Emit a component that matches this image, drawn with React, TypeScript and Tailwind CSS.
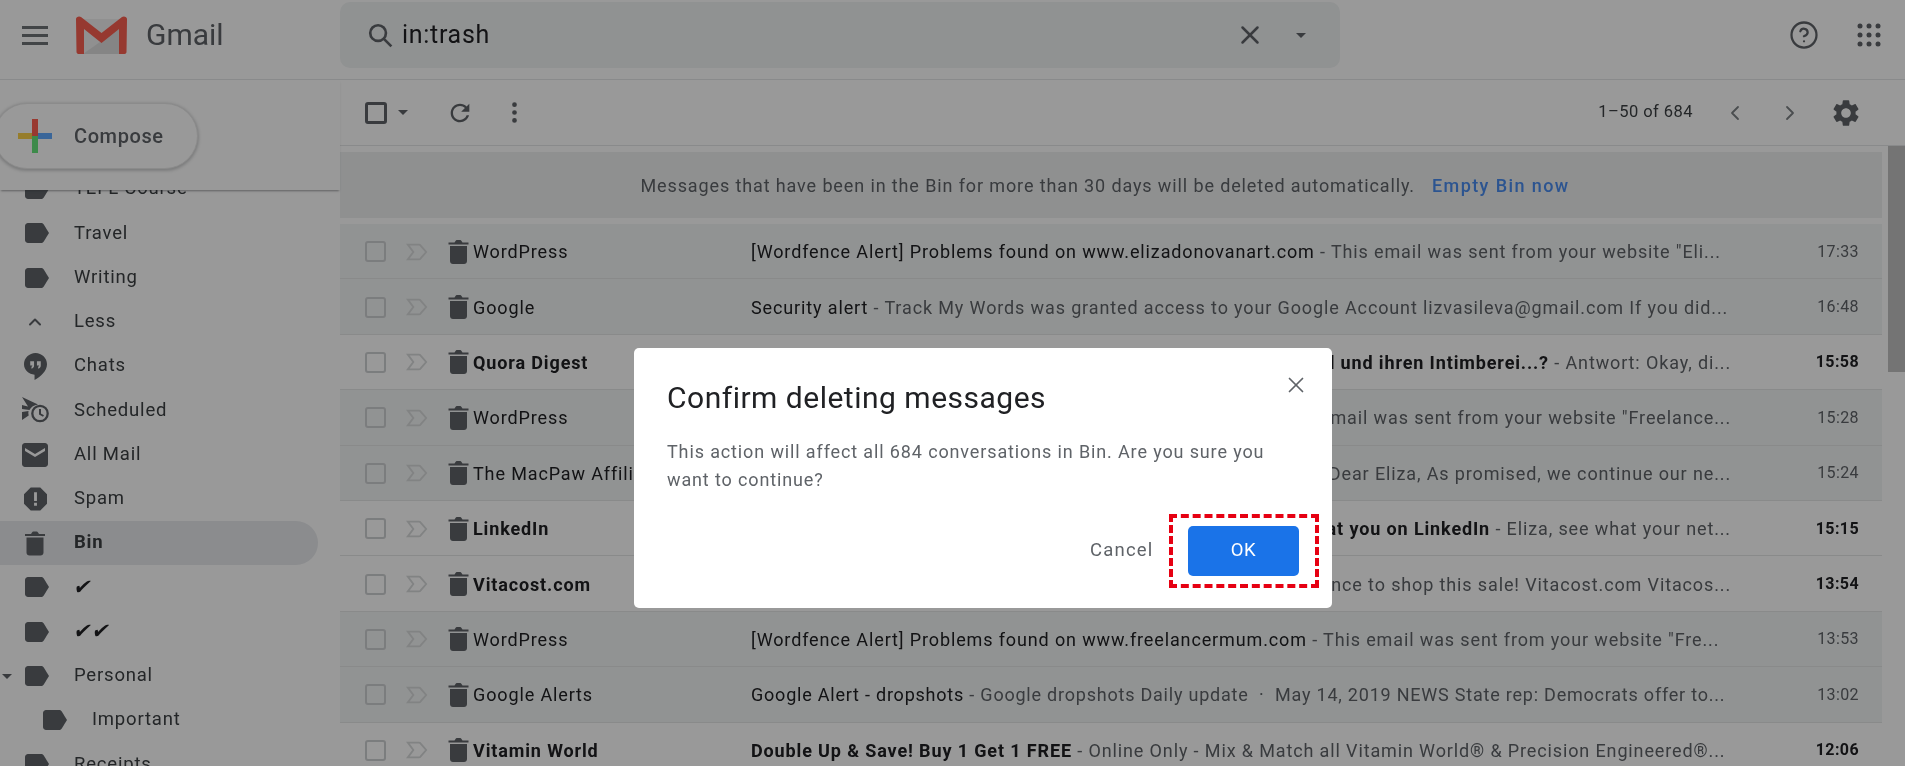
import React from "react";
import { X, ChevronLeft, ChevronRight, ChevronUp, MoreVertical, CircleHelp } from "lucide-react";

const Label = ({ className = "" }: { className?: string }) => (
  <svg viewBox="0 0 24 20" className={"ml-[3px] w-[24px] h-[20px] " + className}><path fill="#5f6368" d="M3 0h13c1 0 2 .5 2.600 1.300L24 10l-5.400 8.700C18 19.500 17 20 16 20H3c-1.600 0-3-1.400-3-3V3c0-1.600 1.400-3 3-3z" /></svg>
);
const Trash = ({ className = "" }: { className?: string }) => (
  <svg viewBox="0 0 20 24" className={className}><path fill="#5f6368" d="M1.500 6h17v15c0 1.700-1.300 3-3 3h-11c-1.700 0-3-1.300-3-3zM0 2.500h6L7 1c.3-.6.8-1 1.400-1h3.200c.6 0 1.100.4 1.400 1l1 1.500h6V4.500H0z" /></svg>
);
const Caret = ({ className = "" }: { className?: string }) => (
  <span className={"w-0 h-0 border-x-[5px] border-x-transparent border-t-[5px] border-t-[#5f6368] " + className} />
);
const Checkbox = ({ strong = false }: { strong?: boolean }) => (
  <span className={strong ? "w-[22px] h-[22px] rounded-[3px] border-[3px] border-[#5f6368]" : "w-[21px] h-[21px] rounded-[3px] border-[2px] border-[#ced0d2]"} />
);

type NavItem = { label: string; icon: React.ReactNode; bold?: boolean; indent?: boolean; caret?: boolean };
const nav: NavItem[] = [
  { label: "TEFL Course", icon: <Label /> },
  { label: "Travel", icon: <Label /> },
  { label: "Writing", icon: <Label /> },
  { label: "Less", icon: <ChevronUp size={20} strokeWidth={2.4} color="#5f6368" /> },
  { label: "Chats", icon: <svg viewBox="0 0 24 28" className="w-[23px] h-[29px]"><path fill="#5f6368" d="M12 0C5.400 0 0 5.200 0 11.700 0 18 5.200 22 11 22.500V28c6-3 13-9 13-16.300C24 5.200 18.600 0 12 0zM10.500 13c0 1.700-1 3-2.700 3.300v-2c.6-.2.900-.6 1-1.300H6.500V8.500h4zm7 0c0 1.700-1 3-2.700 3.300v-2c.6-.2.900-.6 1-1.300h-2.300V8.500h4z" /></svg> },
  { label: "Scheduled", icon: <svg viewBox="0 0 28 26" className="w-[28px] h-[26px]"><path fill="#5f6368" d="M1 0l16 7.500c-4 .5-7 2.500-8.500 5.500L1 12V8l6 1.500zM1 15l6.500-1c-.3 1.500-.2 3 .2 4.500L1 23z" /><circle cx="19" cy="16.500" r="7.700" fill="none" stroke="#5f6368" strokeWidth="2.300" /><path d="M19 12v5l3.500 2" fill="none" stroke="#5f6368" strokeWidth="2" /></svg> },
  { label: "All Mail", icon: <svg viewBox="0 0 26 24" className="w-[26px] h-[24px]"><path fill="#5f6368" d="M3 0h20c1.600 0 3 1.400 3 3v18c0 1.600-1.400 3-3 3H3c-1.600 0-3-1.400-3-3V3c0-1.600 1.400-3 3-3zm0 5v3l10 6 10-6V5L13 11z" fillRule="evenodd" /></svg> },
  { label: "Spam", icon: <svg viewBox="0 0 24 24" className="w-[23px] h-[24px]"><path fill="#5f6368" fillRule="evenodd" d="M7 0h10l7 7v10l-7 7H7l-7-7V7zm3.500 5v9h3V5zm0 11v3h3v-3z" /></svg> },
  { label: "Bin", bold: true, icon: <Trash className="w-[20px] h-[27px]" /> },
  { label: "✔", icon: <Label /> },
  { label: "✔✔", icon: <Label /> },
  { label: "Personal", icon: <Label />, caret: true },
  { label: "Important", icon: <Label />, indent: true },
  { label: "Receipts", icon: <Label /> },
];

type Row = { sender: string; subject: string; snippet: string; time: string; unread?: boolean; covered?: boolean; tight?: boolean };
const rows: Row[] = [
  { sender: "WordPress", subject: "[Wordfence Alert] Problems found on www.elizadonovanart.com", snippet: ' - This email was sent from your website "Eli...', time: "17:33" },
  { sender: "Google", subject: "Security alert", snippet: " - Track My Words was granted access to your Google Account lizvasileva@gmail.com If you did...", time: "16:48" },
  { sender: "Quora Digest", subject: "Was sagt dein Freund und ihren Intimberei...?", snippet: " - Antwort: Okay, di...", time: "15:58", unread: true, covered: true },
  { sender: "WordPress", subject: "[Wordfence Alert] Problems", snippet: ' - This email was sent from your website "Freelance...', time: "15:28", covered: true },
  { sender: "The MacPaw Affiliate", subject: "Affiliate update", snippet: " - Dear Eliza, As promised, we continue our ne...", time: "15:24", covered: true },
  { sender: "LinkedIn", subject: "Eliza, people are looking at you on LinkedIn", snippet: " - Eliza, see what your net...", time: "15:15", unread: true, covered: true },
  { sender: "Vitacost.com", subject: "Last chance", snippet: " - Your last chance to shop this sale! Vitacost.com Vitacos...", time: "13:54", unread: true, covered: true },
  { sender: "WordPress", subject: "[Wordfence Alert] Problems found on www.freelancermum.com", snippet: ' - This email was sent from your website "Fre...', time: "13:53" },
  { sender: "Google Alerts", subject: "Google Alert - dropshots", snippet: " - Google dropshots Daily update \u00a0·\u00a0 May 14, 2019 NEWS State rep: Democrats offer to...", time: "13:02", tight: true },
  { sender: "Vitamin World", subject: "Double Up & Save! Buy 1 Get 1 FREE", snippet: " - Online Only - Mix & Match all Vitamin World® & Precision Engineered®...", time: "12:06", unread: true },
];

export default function App() {
  return (
    <div className="relative w-[1905px] h-[766px] overflow-hidden bg-white flex flex-col font-['Roboto',sans-serif] text-[#202124] blur-[0.4px]">
      <header className="h-[80px] shrink-0 flex items-center border-b border-[#e5e7e8] pb-[9px]">
        <div className="w-[340px] flex items-center">
          <div className="ml-[22px] w-[26px] flex flex-col gap-[5px]">
            <span className="h-[3px] bg-[#6f7377]" />
            <span className="h-[3px] bg-[#6f7377]" />
            <span className="h-[3px] bg-[#6f7377]" />
          </div>
          <svg viewBox="0 0 51 38" className="ml-[28px] w-[51px] h-[38px]">
            <path fill="#f0f0f0" d="M7 3h37v35H7z" />
            <path fill="#dedede" d="M7 38L44 12v26z" />
            <path fill="#fb5f50" d="M0 3C0 1 3-.5 5 1l20.500 16L46 1c2-1.500 5 0 5 2l-.5 33c0 1-1 2-2 2H43V13L25.500 27 8 13v25H2.500c-1 0-2-1-2-2z" />
          </svg>
          <span className="ml-[19px] text-[30px] leading-none text-[#5f6368]">Gmail</span>
        </div>
        <div className="w-[1000px] h-[66px] bg-[#f1f3f4] rounded-[10px] flex items-center text-[#202124]">
          <svg viewBox="0 0 24 24" className="ml-[26px] w-[29px] h-[29px]" fill="none" stroke="#5f6368" strokeWidth="2.200"><circle cx="10" cy="10" r="6.500" /><path d="M15 15l6 6" /></svg>
          <span className="ml-[7px] text-[25px] tracking-[0.7px]">in:trash</span>
          <X size={30} strokeWidth={2} color="#5f6368" className="ml-auto mr-[31px]" />
          <Caret className="mr-[34px]" />
        </div>
        <CircleHelp size={30} strokeWidth={1.8} color="#5f6368" className="ml-[449px]" />
        <svg viewBox="0 0 24 24" className="ml-[38px] w-[24px] h-[24px]">
          {[3, 12, 21].flatMap((y) => [3, 12, 21].map((x) => <circle key={x + "-" + y} cx={x} cy={y} r="2.500" fill="#5f6368" />))}
        </svg>
      </header>

      <div className="flex-1 flex min-h-0">
        <aside className="w-[340px] shrink-0 flex flex-col">
          <div className="h-[110px] shrink-0 relative z-10 bg-white shadow-[0_2px_2px_-1px_rgba(60,64,67,0.5)] pt-[23px]">
            <div className="-ml-[6px] w-[204px] h-[66px] rounded-full bg-white border border-[#e8e8e8] shadow-[0_1px_3px_1px_rgba(60,64,67,0.25)] flex items-center">
              <svg viewBox="0 0 34 34" className="ml-[23px] w-[34px] h-[34px]">
                <rect x="0" y="14" width="17" height="6" fill="#fbd04a" />
                <rect x="17" y="14" width="17" height="6" fill="#62aaff" />
                <rect x="14" y="0" width="6" height="17" fill="#ff6050" />
                <rect x="14" y="17" width="6" height="17" fill="#66e67c" />
              </svg>
              <span className="ml-[22px] text-[20px] font-medium text-[#5f6368] tracking-[0.6px]">Compose</span>
            </div>
          </div>
          <div className="flex-1 overflow-hidden">
            <div className="-mt-[23px] pr-[22px]">
              {nav.map((n) => (
                <div key={n.label} className={"relative h-[44.25px] flex items-center rounded-r-full " + (n.bold ? "bg-[#e8eaed]" : "")}>
                  {n.caret && <Caret className="absolute left-[2px] top-[20px]" />}
                  <span className={"w-[30px] flex justify-center " + (n.indent ? "ml-[38px]" : "ml-[20px]")}>{n.icon}</span>
                  <span className={"ml-[24px] tracking-[0.8px] " + (n.bold ? "font-bold " : "") + (n.label.startsWith("✔") ? "inline-block -skew-x-12 text-[21px] font-['DejaVu_Sans',sans-serif] text-[#202124]" : "text-[18.500px] text-[#3c4043]")}>{n.label}</span>
                </div>
              ))}
            </div>
          </div>
        </aside>

        <main className="flex-1 min-w-0 flex">
          <div className="flex-1 min-w-0 flex flex-col">
            <div className="h-[66px] shrink-0 flex items-center border-b border-[#e5e7e8] pl-[25px] mr-[-17px]">
              <Checkbox strong />
              <Caret className="ml-[11px]" />
              <svg viewBox="0 0 24 24" className="ml-[38px] w-[28px] h-[28px]"><path fill="#5f6368" d="M17.650 6.350C16.200 4.900 14.210 4 12 4c-4.420 0-7.990 3.580-7.990 8s3.570 8 7.990 8c3.730 0 6.840-2.550 7.730-6h-2.080c-.82 2.330-3.040 4-5.650 4-3.310 0-6-2.690-6-6s2.690-6 6-6c1.660 0 3.140.69 4.220 1.780L13 11h7V4l-2.350 2.350z" /></svg>
              <MoreVertical size={27} strokeWidth={2.2} color="#5f6368" className="ml-[27px]" />
              <span className="ml-auto text-[16.500px] tracking-[0.45px] text-[#3c4043]">1–50 of 684</span>
              <ChevronLeft size={24} strokeWidth={1.800} color="#7c8084" className="ml-[30px]" />
              <ChevronRight size={24} strokeWidth={1.800} color="#7c8084" className="ml-[31px]" />
              <svg viewBox="0 0 24 24" className="ml-[28px] mr-[43px] w-[32px] h-[32px]"><path fill="#5f6368" d="M19.140 12.940c.04-.3.06-.61.06-.94 0-.32-.02-.64-.07-.94l2.030-1.580c.18-.14.23-.41.12-.61l-1.920-3.320c-.12-.22-.37-.29-.59-.22l-2.390.96c-.5-.38-1.030-.7-1.620-.94l-.36-2.540c-.04-.24-.24-.41-.48-.41h-3.840c-.24 0-.43.17-.47.41l-.36 2.540c-.59.24-1.130.57-1.620.94l-2.390-.96c-.22-.08-.47 0-.59.22L2.740 8.870c-.12.21-.08.47.12.61l2.030 1.580c-.05.3-.09.63-.09.94s.02.64.07.94l-2.030 1.580c-.18.14-.23.41-.12.61l1.920 3.320c.12.22.37.29.59.22l2.390-.96c.5.38 1.030.7 1.620.94l.36 2.540c.05.24.24.41.48.41h3.840c.24 0 .44-.17.47-.41l.36-2.540c.59-.24 1.130-.56 1.620-.94l2.390.96c.22.08.47 0 .59-.22l1.920-3.320c.12-.22.07-.47-.12-.61l-2.010-1.580zM12 15.600c-1.980 0-3.600-1.620-3.600-3.600s1.620-3.600 3.600-3.600 3.600 1.620 3.600 3.600-1.620 3.600-3.600 3.600z" /></svg>
            </div>
            <div className="mt-[6px] h-[66px] shrink-0 mr-[6px] pr-[12px] bg-[#eef0f1] flex items-center justify-center text-[18px] tracking-[0.88px] text-[#5f6368]">
              <span>Messages that have been in the Bin for more than 30 days will be deleted automatically.</span>
              <span className="ml-[17px] font-medium tracking-[1.4px] text-[#4a8df0]">Empty Bin now</span>
            </div>
            <div className="mt-[6px] shrink-0 mr-[6px]">
              {rows.map((r, i) => (
                <div key={i} className={"h-[55.400px] pt-[1px] flex items-center border-b border-[#e4e6e7] text-[18px] tracking-[0.87px] " + (r.unread ? "bg-white" : "bg-[#f2f5f5]")}>
                  <span className="ml-[25px] flex"><Checkbox /></span>
                  <svg viewBox="0 0 24 20" className="ml-[20px] w-[22px] h-[20px]"><path fill="none" stroke="#d8dadb" strokeWidth="2" d="M2 2h12c1 0 1.500.3 2 1l6 7-6 7c-.5.7-1 1-2 1H2l6-8z" /></svg>
                  <Trash className="ml-[20px] w-[21px] h-[24px]" />
                  <span className={"ml-[4px] w-[278px] overflow-hidden whitespace-nowrap " + (r.unread ? "font-bold" : "text-[#202124]")}>{r.sender}</span>
                  <span className={"w-[982px] overflow-hidden whitespace-nowrap text-[#5f6368] " + (r.covered ? "text-right pr-[2px] " : "") + (r.tight ? "tracking-[0.78px]" : "")}>
                    <span className={r.unread ? "font-bold text-[#202124]" : "text-[#202124]"}>{r.subject}</span>
                    {r.snippet}
                  </span>
                  <span className={"ml-auto mr-[23px] text-[16px] tracking-[0.4px] " + (r.unread ? "font-bold" : "text-[#5f6368]")}>{r.time}</span>
                </div>
              ))}
            </div>
          </div>
          <div className="w-[17px] shrink-0 pt-[66px]">
            <div className="h-[226px] bg-[#c1c1c1]" />
          </div>
        </main>
      </div>

      <div className="absolute inset-0 z-20 bg-black/40 pl-[634px] pt-[348px]">
        <div className="relative w-[698px] h-[260px] bg-white rounded-[5px] pl-[33px] pt-[32px]">
          <h2 className="text-[30px] leading-[36px] tracking-[0.5px] text-[#202124]">Confirm deleting messages</h2>
          <X size={26} strokeWidth={1.6} color="#5f6368" className="absolute right-[23px] top-[24px]" />
          <p className="mt-[22px] w-[610px] text-[18px] leading-[28px] tracking-[0.87px] text-[#5f6368]">
            This action will affect all 684 conversations in Bin. Are you sure you want to continue?
          </p>
          <div className="absolute left-[456px] top-[178px] w-[209px] h-[50px] flex items-center">
            <span className="text-[18.500px] tracking-[1.200px] text-[#5f6368]">Cancel</span>
            <button className="ml-auto w-[111px] h-[50px] rounded-[5px] bg-[#1a73e8] text-white text-[18.500px] tracking-[0.5px]">OK</button>
          </div>
          <div className="absolute left-[535px] top-[166px] w-[150px] h-[74px] border-[4px] border-dashed border-[#e60012]" />
        </div>
      </div>
    </div>
  );
}
